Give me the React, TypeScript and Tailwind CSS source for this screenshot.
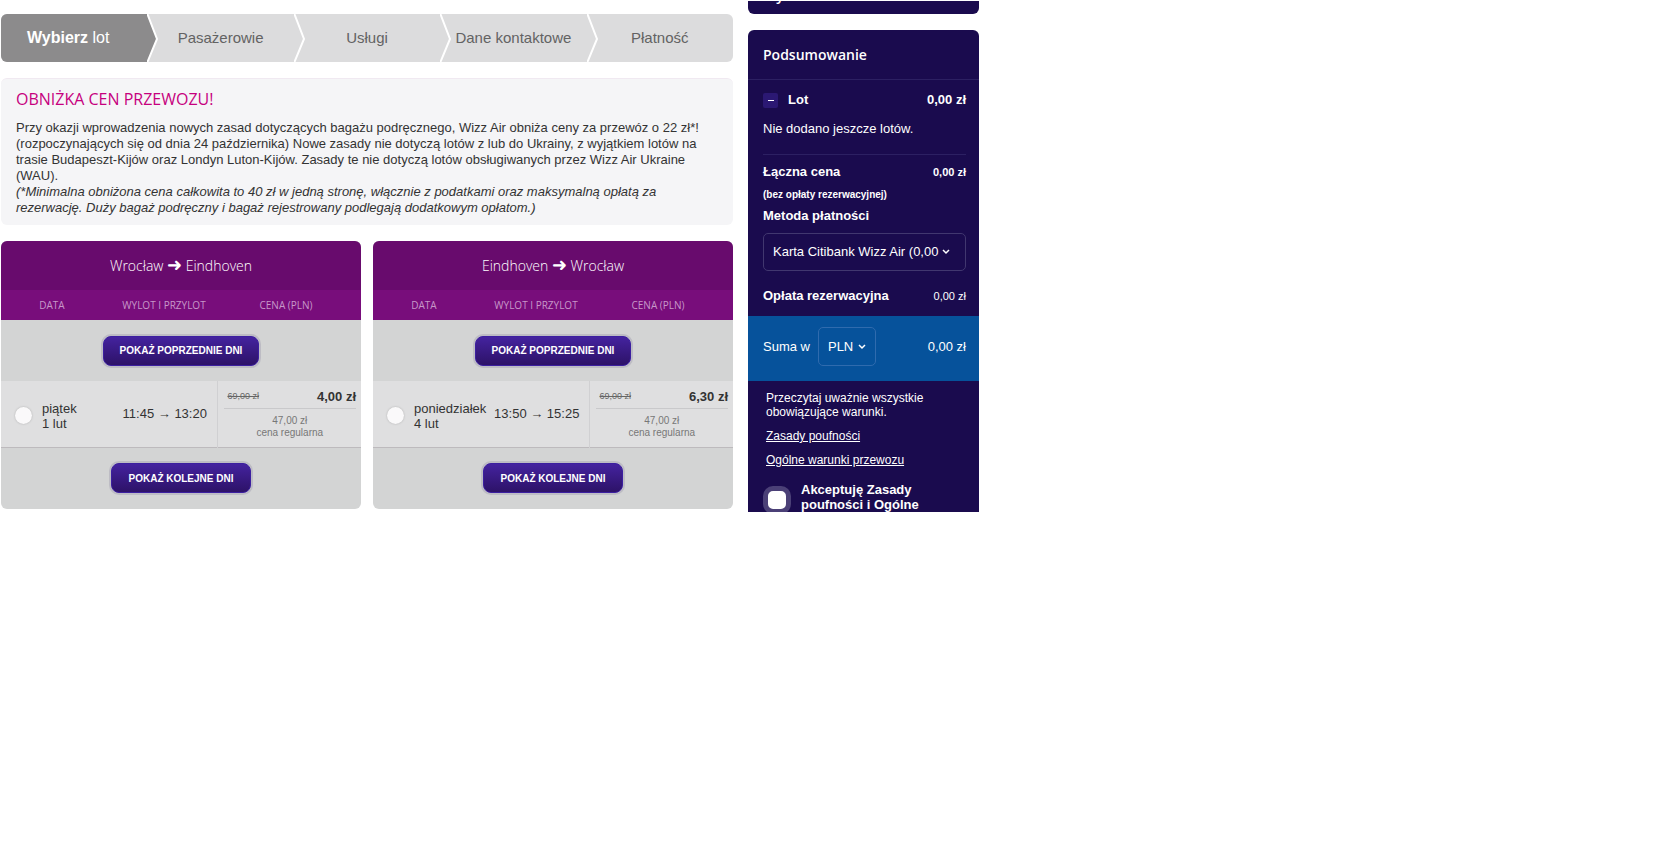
import { useState } from "react";
import clsx from "clsx";

const ARIAL = "font-['Liberation_Sans',Arial,sans-serif]";
const OPEN = "font-['Open_Sans','Noto_Sans',sans-serif]";

const STEPS = ["lot", "Pasażerowie", "Usługi", "Dane kontaktowe", "Płatność"];

type Flight = {
  id: string;
  from: string;
  to: string;
  day: string;
  date: string;
  departs: string;
  arrives: string;
  oldPrice: string;
  price: string;
  regular: string;
};

const FLIGHTS: Flight[] = [
  {
    id: "outbound",
    from: "Wrocław",
    to: "Eindhoven",
    day: "piątek",
    date: "1 lut",
    departs: "11:45",
    arrives: "13:20",
    oldPrice: "69,00 zł",
    price: "4,00 zł",
    regular: "47,00 zł",
  },
  {
    id: "inbound",
    from: "Eindhoven",
    to: "Wrocław",
    day: "poniedziałek",
    date: "4 lut",
    departs: "13:50",
    arrives: "15:25",
    oldPrice: "69,00 zł",
    price: "6,30 zł",
    regular: "47,00 zł",
  },
];

function StepBar() {
  return (
    <ol className="grid h-12 grid-cols-5 overflow-hidden rounded-md bg-[#dcdcdd] text-[15px] text-[#636363]">
      {STEPS.map((step, i) => (
        <li
          key={step}
          aria-current={i === 0 ? "step" : undefined}
          className={clsx(
            "relative flex items-center justify-center whitespace-nowrap",
            i === 0 && "bg-[#8c8b8c] pr-3 text-base text-white",
          )}
        >
          <span>
            {i === 0 && <b>Wybierz </b>}
            {step}
          </span>
          {i < STEPS.length - 1 && (
            <svg
              className={clsx(
                "absolute top-0 left-full z-10",
                i === 0 ? "text-[#8c8b8c]" : "text-[#dcdcdd]",
              )}
              width="12"
              height="48"
              viewBox="0 0 12 48"
              aria-hidden
            >
              <path d="M0 0L10 25L0 48Z" fill="currentColor" />
              <path d="M0 -1L10 25L0 49" fill="none" stroke="#fff" strokeWidth="2" />
            </svg>
          )}
        </li>
      ))}
    </ol>
  );
}

function Notice() {
  return (
    <section className="rounded-md border-t border-[#f0e9f1] bg-[#f5f5f7] px-[15px] pt-2 pb-[9px] text-[13px] leading-4 text-[#333]">
      <h2 className={clsx(OPEN, "mb-[9px] text-base leading-6 text-[#c6007e]")}>OBNIŻKA CEN PRZEWOZU!</h2>
      <p>
        Przy okazji wprowadzenia nowych zasad dotyczących bagażu podręcznego, Wizz Air obniża ceny za przewóz o 22 zł*!
        (rozpoczynających się od dnia 24 października) Nowe zasady nie dotyczą lotów z lub do Ukrainy, z wyjątkiem lotów
        na trasie Budapeszt-Kijów oraz Londyn Luton-Kijów. Zasady te nie dotyczą lotów obsługiwanych przez Wizz Air
        Ukraine (WAU).
      </p>
      <p className="italic">
        (*Minimalna obniżona cena całkowita to 40 zł w jedną stronę, włącznie z podatkami oraz maksymalną opłatą za
        rezerwację. Duży bagaż podręczny i bagaż rejestrowany podlegają dodatkowym opłatom.)
      </p>
    </section>
  );
}

function DaysButton({ children }: { children: string }) {
  return (
    <button
      type="button"
      className="h-[30px] rounded-lg border border-[#3c1fa0] bg-linear-to-b from-[#44239f] to-[#2d1268] px-4 text-[10px] font-bold text-white ring-2 ring-[#bdbcc4]"
    >
      {children}
    </button>
  );
}

function FlightCard({ flight }: { flight: Flight }) {
  const [picked, setPicked] = useState(false);

  return (
    <section className="min-w-0 flex-1 overflow-hidden rounded-md bg-[#d3d4d4]">
      <table className="w-full table-fixed border-collapse">
        <caption className={clsx(OPEN, "h-[49px] bg-[#680b6d] text-sm leading-[50px] font-light text-white")}>
          {flight.from} <span className="font-['DejaVu_Sans',sans-serif] text-lg leading-none">➜</span> {flight.to}
        </caption>
        <colgroup>
          <col className="w-[30%]" />
          <col className="w-[30%]" />
          <col />
        </colgroup>
        <thead>
          <tr className={clsx(OPEN, "h-[30px] bg-[#780d7b] text-[10px] text-[#c797c9]")}>
            <th className="pr-1.5 font-normal">DATA</th>
            <th className="pl-0.5 font-normal">WYLOT I PRZYLOT</th>
            <th className="pr-1.5 font-normal">CENA (PLN)</th>
          </tr>
        </thead>
        <tbody>
          <tr>
            <td colSpan={3} className="h-[61px] text-center">
              <DaysButton>POKAŻ POPRZEDNIE DNI</DaysButton>
            </td>
          </tr>
          <tr className="h-[66px] border-b border-[#bdbabd] bg-[#dfdfe0] text-[13px] text-[#333]">
            <td>
              <label className="flex items-center gap-2.5 pt-1 pl-3.5 leading-[15px] whitespace-nowrap">
                <input
                  type="radio"
                  name={flight.id}
                  checked={picked}
                  onChange={() => setPicked(true)}
                  className="size-[17px] shrink-0 appearance-none rounded-full bg-[#faf9fa] shadow-[0_0_2px_#aaa] checked:border-4 checked:border-[#780d7b]"
                />
                <span>
                  {flight.day}
                  <br />
                  {flight.date}
                </span>
              </label>
            </td>
            <td className="pl-1 text-center whitespace-nowrap">
              {flight.departs} → {flight.arrives}
            </td>
            <td className="border-l border-[#d0d0d2] pr-[5px] pl-1.5 align-top">
              <div className="flex h-7 items-center justify-between border-b border-[#c9c9cb] pt-1 pl-1">
                <s className="text-[9px] text-[#666]">{flight.oldPrice}</s>
                <b>{flight.price}</b>
              </div>
              <p className="pt-1.5 text-center text-[10px] leading-3 text-[#777]">
                {flight.regular}
                <br />
                cena regularna
              </p>
            </td>
          </tr>
          <tr>
            <td colSpan={3} className="h-[62px] text-center">
              <DaysButton>POKAŻ KOLEJNE DNI</DaysButton>
            </td>
          </tr>
        </tbody>
      </table>
    </section>
  );
}

function Chevron({ className }: { className: string }) {
  return (
    <svg
      className={clsx("pointer-events-none absolute top-1/2 -translate-y-1/2", className)}
      width="8"
      height="6"
      viewBox="0 0 8 6"
      aria-hidden
    >
      <path d="M1 1L4 4L7 1" fill="none" stroke="#fff" strokeWidth="1.5" />
    </svg>
  );
}

function Summary() {
  const [open, setOpen] = useState(true);
  const [accepted, setAccepted] = useState(false);

  return (
    <section className="overflow-hidden rounded-t-md bg-[#1a0b4e]">
      <h2 className={clsx(OPEN, "h-[50px] border-b border-[#2c2062] px-[15px] text-sm leading-[50px] font-semibold")}>
        Podsumowanie
      </h2>

      <div className="pr-[13px] pl-[15px]">
        <div className="border-b border-[#2c2062] pt-[11px] pb-4">
          <div className="flex items-center leading-[18px] font-bold">
            <button
              type="button"
              aria-label="Lot"
              aria-expanded={open}
              onClick={() => setOpen(!open)}
              className="mr-2.5 flex size-[15px] items-center justify-center rounded-xs bg-[#2b1873]"
            >
              <span className="h-px w-1.5 bg-white" />
            </button>
            Lot
            <span className="ml-auto">0,00 zł</span>
          </div>
          {open && <p className="mt-[11px] leading-[18px]">Nie dodano jeszcze lotów.</p>}
        </div>

        <div className="flex items-center justify-between pt-2 leading-[18px] font-bold">
          Łączna cena
          <span className="text-[11px]">0,00 zł</span>
        </div>
        <p className="pt-1.5 text-[10px] leading-4 font-bold">(bez opłaty rezerwacyjnej)</p>
        <label htmlFor="payment" className="block pt-1 leading-[18px] font-bold">
          Metoda płatności
        </label>
        <div className="relative mt-2">
          <select
            id="payment"
            className="h-[38px] w-full appearance-none rounded-[5px] border border-[#41376f] pr-6 pl-[9px]"
          >
            <option>Karta Citibank Wizz Air (0,00 zł)</option>
          </select>
          <Chevron className="right-4" />
        </div>
        <div className="flex items-center justify-between pt-4 pb-[11px] leading-[18px] font-bold">
          Opłata rezerwacyjna
          <span className="text-[11px] font-normal">0,00 zł</span>
        </div>
      </div>

      <div className="flex h-[65px] items-center bg-[#06529b] pr-[13px] pb-1 pl-[15px]">
        <label htmlFor="currency">Suma w</label>
        <div className="relative ml-2">
          <select
            id="currency"
            className="h-[39px] w-[58px] appearance-none rounded-[5px] border border-[#2f6bae] pl-[9px]"
          >
            <option>PLN</option>
          </select>
          <Chevron className="right-2.5" />
        </div>
        <span className="ml-auto">0,00 zł</span>
      </div>

      <div className="flex flex-col items-start gap-2.5 px-[18px] pt-2.5 text-xs leading-3.5">
        <p>Przeczytaj uważnie wszystkie obowiązujące warunki.</p>
        <a href="#privacy" className="underline">
          Zasady poufności
        </a>
        <a href="#terms" className="underline">
          Ogólne warunki przewozu
        </a>
      </div>

      <label className="mt-[15px] flex h-[30px] items-start gap-2.5 overflow-hidden pl-[15px] leading-[15px] font-bold">
        <input
          type="checkbox"
          checked={accepted}
          onChange={(e) => setAccepted(e.target.checked)}
          className="mt-1 size-7 shrink-0 appearance-none rounded-[10px] border-5 border-[#4b4077] bg-white checked:bg-[#c6007e]"
        />
        <span>
          Akceptuję Zasady
          <br />
          poufności i Ogólne
        </span>
      </label>
    </section>
  );
}

export default function App() {
  return (
    <main className={clsx(ARIAL, "flex max-w-[979px] gap-[15px] pt-px pl-px text-[13px]")}>
      <div className="flex min-w-0 flex-1 flex-col gap-4 pt-[13px]">
        <StepBar />
        <Notice />
        <div className="flex gap-3">
          {FLIGHTS.map((flight) => (
            <FlightCard key={flight.id} flight={flight} />
          ))}
        </div>
      </div>

      <aside className="w-[231px] shrink-0 text-white">
        {/* lower edge of the search panel, scrolled almost out of view */}
        <div className="mb-4 flex h-[13px] items-end overflow-hidden rounded-b-md bg-[#1a0b4e] px-[15px] pb-2.5">
          <span className={clsx(OPEN, "text-sm leading-4 font-semibold")}>Wy</span>
        </div>
        <Summary />
      </aside>
    </main>
  );
}
